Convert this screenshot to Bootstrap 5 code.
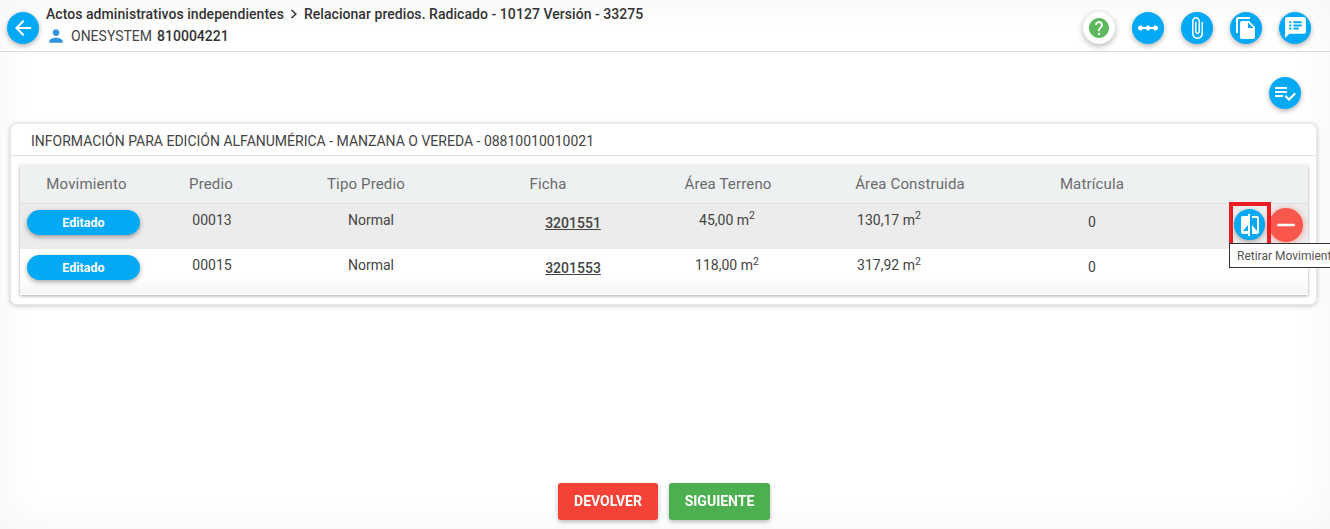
<!DOCTYPE html>
<html lang="es">
<head>
<meta charset="utf-8">
<title>Relacionar predios</title>
<link href="https://cdn.jsdelivr.net/npm/bootstrap@5.3.0/dist/css/bootstrap.min.css" rel="stylesheet">
<style>
html,body{height:100%;overflow:hidden}
body{font-family:Roboto,"Liberation Sans",sans-serif;font-size:14px;color:#333;background:#fff}
.page-wrap{height:529px;box-shadow:inset 0 0 46px rgba(0,0,0,.045)}
.top-bar{height:52px;border-bottom:1px solid #dcdcdc;padding:0 19px 0 7px}
.fab{width:32px;height:32px;border-radius:50%;background:#03a9f4;border:0;padding:0;display:flex;align-items:center;justify-content:center;flex:none;box-shadow:0 2px 5px rgba(0,0,0,.3);color:#fff}
.fab svg{fill:currentColor}
.fab-help{background:#fff;box-shadow:0 2px 6px rgba(0,0,0,.3);color:#5cb85c}
.fab-red{background:#f9574c;box-shadow:0 1px 6px rgba(244,67,54,.5)}
.back-fab{margin-right:7px}
.top-title{font-size:14px;font-weight:500;color:#333;line-height:15px;margin-top:1px;letter-spacing:.05px}
.top-user{font-size:14px;color:#444;line-height:16px;margin-top:4px}
.top-user svg{fill:#2f96dc;margin-right:5px}
.top-user b{font-weight:500;color:#333;margin-left:5px}
.top-icons{gap:16.9px}
.check-row{height:71px;padding:25px 29px 0 0}
.panel-box{margin:0 13px 0 10px;height:182px;border:1px solid #e6e6e6;border-radius:7px;box-shadow:0 1px 5px rgba(0,0,0,.22);background:#fff}
.panel-head{height:32px;padding:9px 20px 0;font-size:14px;line-height:16px;color:#444;border-bottom:1px solid #e2e2e2}
.inner-box{margin:9px 8px 0 9px;height:130px;box-shadow:0 1px 3px rgba(0,0,0,.35);background:#fff}
.data-table{width:1288px;table-layout:fixed;margin:0;border-collapse:collapse}
.data-table th{height:38px;background:#eef1f2;font-size:15px;font-weight:400;color:#6b6b6b;text-align:center;vertical-align:middle;padding:0;border-bottom:1px solid #dee1e2;letter-spacing:.15px}
.data-table td{height:45px;padding:0;text-align:center;vertical-align:top;font-size:14px;color:#444;border:0;position:relative}
.data-table .row-hl td{height:46px;background:#ececec}
.row-plain td{background:linear-gradient(#fff 60%,#f6f6f6)}
.cell-text{display:block;padding-top:8px;line-height:16px}
.cell-low{display:block;padding-top:10px;line-height:16px}
.shift-pred{padding-left:2px}
.shift-tipo{padding-left:10px}
.shift-ficha{padding-left:50px}
.shift-area{padding-right:2px}
.shift-cons{padding-right:42px}
.state-pill{display:block;width:113px;height:25px;margin:6px 0 0 7px;padding:0;border:0;border-radius:13px;background:#03a9f4;color:#fff;font-size:12.5px;font-weight:700;line-height:25px;box-shadow:0 2px 5px rgba(0,0,0,.35)}
.ficha-link{font-weight:500;color:#444;text-decoration:underline;display:block;padding-top:11px;line-height:16px}
.action-set{display:flex;align-items:center;gap:4px;padding:4px 0 0 47px}
.action-set .fab{width:31px;height:31px}
.action-set .fab-red{width:34px;height:34px}
.mark-box{position:absolute;left:42px;top:-2px;width:42px;height:47px;border:4.5px solid #ed1c24;pointer-events:none}
.tip-box{position:absolute;left:1229px;top:243px;height:25px;width:120px;background:#fff;border:1px solid #333;font-size:12px;line-height:24px;padding-left:7px;color:#555;white-space:nowrap}
.footer-row{position:fixed;left:0;right:0;top:483px;gap:11px;padding-right:2px}
.foot-btn{height:37px;border:0;border-radius:3px;color:#fff;font-size:14px;font-weight:700;padding:0;box-shadow:0 2px 4px rgba(0,0,0,.25)}
.foot-red{width:100px;background:#f44336}
.foot-green{width:101px;background:#4caf50}
</style>
</head>
<body>
<div class="page-wrap position-relative overflow-hidden">
  <header class="top-bar d-flex align-items-center justify-content-between">
    <div class="d-flex align-items-center">
      <button class="fab back-fab mt-1" type="button" aria-label="Volver"><svg width="24" height="24" viewBox="0 0 24 24"><path d="M20 11H7.83l5.59-5.59L12 4l-8 8 8 8 1.41-1.41L7.83 13H20v-2z"/></svg></button>
      <div>
        <div class="top-title d-flex align-items-center">Actos administrativos independientes<svg class="mx-1" width="12" height="10" viewBox="0 0 12 10"><path d="M3.5 1 7.8 5 3.5 9" fill="none" stroke="#333" stroke-width="1.6"/></svg>Relacionar predios. Radicado - 10127 Versión - 33275</div>
        <div class="top-user d-flex align-items-center"><svg width="20" height="20" viewBox="0 0 24 24"><path d="M12 12c2.21 0 4-1.79 4-4s-1.79-4-4-4-4 1.79-4 4 1.79 4 4 4zm0 2c-2.67 0-8 1.34-8 4v2h16v-2c0-2.66-5.33-4-8-4z"/></svg>ONESYSTEM <b>810004221</b></div>
      </div>
    </div>
    <div class="top-icons d-flex align-items-center mt-1">
      <button class="fab fab-help" type="button" aria-label="Ayuda"><svg width="24" height="24" viewBox="0 0 24 24"><path d="M12 2C6.48 2 2 6.48 2 12s4.48 10 10 10 10-4.48 10-10S17.52 2 12 2zm1 17h-2v-2h2v2zm2.07-7.75l-.9.92C13.45 12.9 13 13.5 13 15h-2v-.5c0-1.1.45-2.1 1.17-2.83l1.24-1.26c.37-.36.59-.86.59-1.41 0-1.1-.9-2-2-2s-2 .9-2 2H8c0-2.21 1.79-4 4-4s4 1.79 4 4c0 .88-.36 1.68-.93 2.25z"/></svg></button>
      <button class="fab" type="button" aria-label="Flujo"><svg width="24" height="24" viewBox="0 0 24 24"><path d="M19.5 9.5c-1.03 0-1.9.62-2.29 1.5h-2.92c-.39-.88-1.26-1.5-2.29-1.5s-1.9.62-2.29 1.5H6.79c-.39-.88-1.26-1.5-2.29-1.5C3.12 9.5 2 10.62 2 12s1.12 2.5 2.5 2.5c1.03 0 1.9-.62 2.29-1.5h2.92c.39.88 1.26 1.5 2.29 1.5s1.9-.62 2.29-1.5h2.92c.39.88 1.26 1.5 2.29 1.5 1.38 0 2.5-1.12 2.5-2.5s-1.12-2.5-2.5-2.5z"/></svg></button>
      <button class="fab" type="button" aria-label="Adjuntos"><svg width="24" height="24" viewBox="0 0 24 24"><path d="M16.5 6v11.5c0 2.21-1.79 4-4 4s-4-1.79-4-4V5c0-1.38 1.12-2.5 2.5-2.5s2.5 1.12 2.5 2.5v10.5c0 .55-.45 1-1 1s-1-.45-1-1V6H10v9.5c0 1.38 1.12 2.5 2.5 2.5s2.5-1.12 2.5-2.5V5c0-2.21-1.79-4-4-4S7 2.79 7 5v12.5c0 3.04 2.46 5.5 5.5 5.5s5.5-2.46 5.5-5.5V6h-1.5z"/></svg></button>
      <button class="fab" type="button" aria-label="Documentos"><svg width="24" height="24" viewBox="0 0 24 24"><path d="M16 1H4c-1.1 0-2 .9-2 2v14h2V3h12V1zm-1 4l6 6v10c0 1.1-.9 2-2 2H7.99C6.89 23 6 22.1 6 21l.01-14c0-1.1.89-2 1.99-2h7zm-1 7h5.5L14 6.5V12z"/></svg></button>
      <button class="fab" type="button" aria-label="Notas"><svg width="25" height="25" viewBox="0 0 24 24"><path d="M20 2H4c-1.1 0-1.99.9-1.99 2L2 22l4-4h14c1.1 0 2-.9 2-2V4c0-1.1-.9-2-2-2zM8 14H6v-2h2v2zm0-3H6V9h2v2zm0-3H6V6h2v2zm7 6h-5v-2h5v2zm3-3h-8V9h8v2zm0-3h-8V6h8v2z"/></svg></button>
    </div>
  </header>
  <div class="check-row d-flex justify-content-end">
    <button class="fab" type="button" aria-label="Lista"><svg width="24" height="24" viewBox="0 0 24 24"><path d="M14 10H2v2h12v-2zm0-4H2v2h12V6zM2 16h8v-2H2v2zm19.5-4.5L23 13l-6.99 7-4.51-4.5L13 14l3.01 3 5.49-5.5z"/></svg></button>
  </div>
  <section class="panel-box">
    <div class="panel-head">INFORMACIÓN PARA EDICIÓN ALFANUMÉRICA - MANZANA O VEREDA - 08810010010021</div>
    <div class="inner-box">
      <table class="table data-table">
        <colgroup><col style="width:133px"><col style="width:116px"><col style="width:194px"><col style="width:170px"><col style="width:190px"><col style="width:174px"><col style="width:190px"><col style="width:121px"></colgroup>
        <thead><tr><th>Movimiento</th><th>Predio</th><th>Tipo Predio</th><th>Ficha</th><th>Área Terreno</th><th>Área Construida</th><th>Matrícula</th><th></th></tr></thead>
        <tbody>
          <tr class="row-hl">
            <td><button class="state-pill" type="button">Editado</button></td>
            <td><span class="cell-text shift-pred">00013</span></td>
            <td><span class="cell-text shift-tipo">Normal</span></td>
            <td><a class="ficha-link shift-ficha" href="#">3201551</a></td>
            <td><span class="cell-text shift-area">45,00 m<sup>2</sup></span></td>
            <td><span class="cell-text shift-cons">130,17 m<sup>2</sup></span></td>
            <td><span class="cell-low">0</span></td>
            <td>
              <div class="action-set">
                <button class="fab" type="button" aria-label="Retirar Movimiento"><svg width="24" height="24" viewBox="0 0 24 24"><path d="M10 3H5c-1.1 0-2 .9-2 2v14c0 1.1.9 2 2 2h5v2h2V1h-2v2zm0 15H5l5-6v6zm9-15h-5v2h5v13l-5-6v9h5c1.1 0 2-.9 2-2V5c0-1.1-.9-2-2-2z"/></svg></button>
                <button class="fab fab-red" type="button" aria-label="Quitar"><svg width="30" height="30" viewBox="0 0 24 24"><path d="M19 13H5v-2h14v2z"/></svg></button>
              </div>
              <span class="mark-box"></span>
            </td>
          </tr>
          <tr class="row-plain">
            <td><button class="state-pill" type="button">Editado</button></td>
            <td><span class="cell-text shift-pred">00015</span></td>
            <td><span class="cell-text shift-tipo">Normal</span></td>
            <td><a class="ficha-link shift-ficha" href="#">3201553</a></td>
            <td><span class="cell-text shift-area">118,00 m<sup>2</sup></span></td>
            <td><span class="cell-text shift-cons">317,92 m<sup>2</sup></span></td>
            <td><span class="cell-low">0</span></td>
            <td></td>
          </tr>
        </tbody>
      </table>
    </div>
  </section>
  <div class="tip-box">Retirar Movimiento</div>
  <div class="footer-row d-flex justify-content-center">
    <button class="foot-btn foot-red" type="button">DEVOLVER</button>
    <button class="foot-btn foot-green" type="button">SIGUIENTE</button>
  </div>
</div>
<script src="https://cdn.jsdelivr.net/npm/bootstrap@5.3.0/dist/js/bootstrap.bundle.min.js"></script>
</body>
</html>
